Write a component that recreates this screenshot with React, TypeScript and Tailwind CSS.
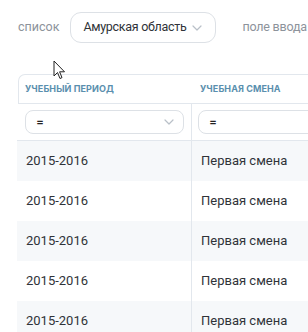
import React from "react";

const Chevron = ({ className = "" }: { className?: string }) => (
  <svg className={className} width="10" height="6" viewBox="0 0 10 6" fill="none">
    <path d="M1 1l4 4 4-4" stroke="#b9c0c8" strokeWidth="1.2" strokeLinecap="round" strokeLinejoin="round" />
  </svg>
);

const rows = [0, 1, 2, 3, 4];
const body = { fontFamily: "Roboto, 'Noto Sans', sans-serif" };

export default function App() {
  return (
    <div
      className="relative w-[308px] h-[332px] overflow-hidden bg-white"
      style={{ fontFamily: "Inter, 'Noto Sans', sans-serif" }}
    >
      <div className="flex items-center pl-[18px] pt-[12px] h-[43px]" style={body}>
        <span className="text-[12.5px] text-[#8d939b]">список</span>
        <div className="ml-[11px] flex items-center h-[31px] w-[146px] shrink-0 rounded-[11px] border border-[#dde1e6] pl-[12px]">
          <span className="text-[12.5px] tracking-[-0.3px] text-[#2f3338] whitespace-nowrap">Амурская область</span>
          <Chevron className="ml-[6px] shrink-0" />
        </div>
        <span className="ml-[26px] text-[12.5px] tracking-[-0.2px] text-[#8d939b] whitespace-nowrap">поле ввода</span>
      </div>

      <div className="mt-[31px] ml-[17px] w-[400px]">
        <div className="flex h-[30px] items-center rounded-tl-[7px] border-t border-l border-b border-[#e2e7ed] ml-[1px]">
          <div className="w-[174px] pl-[6px] text-[9px] font-bold uppercase text-[#5a8fae] tracking-[0.1px]">
            Учебный период
          </div>
          <div className="pl-[7px] text-[9px] font-bold uppercase text-[#5a8fae] tracking-[0.1px]">
            Учебная смена
          </div>
        </div>
        <div className="flex h-[37px] border-b border-[#e2e7ed]">
          <div className="w-[175px] flex items-center pl-[8px] pr-[7px] border-r border-[#e2e7ed]">
            <div className="flex items-center justify-between h-[24px] w-full rounded-[8px] border border-[#dde1e6] pl-[10px] pr-[9px]">
              <span className="text-[12px] font-medium text-[#222]">=</span>
              <Chevron />
            </div>
          </div>
          <div className="flex-1 flex items-center pl-[6px]">
            <div className="flex items-center h-[24px] w-full rounded-[8px] border border-[#dde1e6] pl-[10px]">
              <span className="text-[12px] font-medium text-[#222]">=</span>
            </div>
          </div>
        </div>
        {rows.map((i) => (
          <div key={i} style={body} className={`flex h-[40px] ${i % 2 === 0 ? "bg-[#f6f8fa]" : "bg-white"}`}>
            <div className="w-[175px] flex items-center pl-[9px] border-r border-[#e2e7ed] text-[13px] text-[#2f3338]">
              2015-2016
            </div>
            <div className="flex-1 flex items-center pl-[9px] text-[13px] text-[#2f3338]">Первая смена</div>
          </div>
        ))}
      </div>

      <svg className="absolute left-[53px] top-[60px]" width="13" height="20" viewBox="0 0 13 20">
        <path
          d="M1 1 L1 16 L4.5 12.5 L7 18.5 L9 17.6 L6.6 11.8 L11.5 11.8 Z"
          fill="white"
          stroke="#222"
          strokeWidth="1"
          strokeLinejoin="round"
        />
      </svg>
    </div>
  );
}
